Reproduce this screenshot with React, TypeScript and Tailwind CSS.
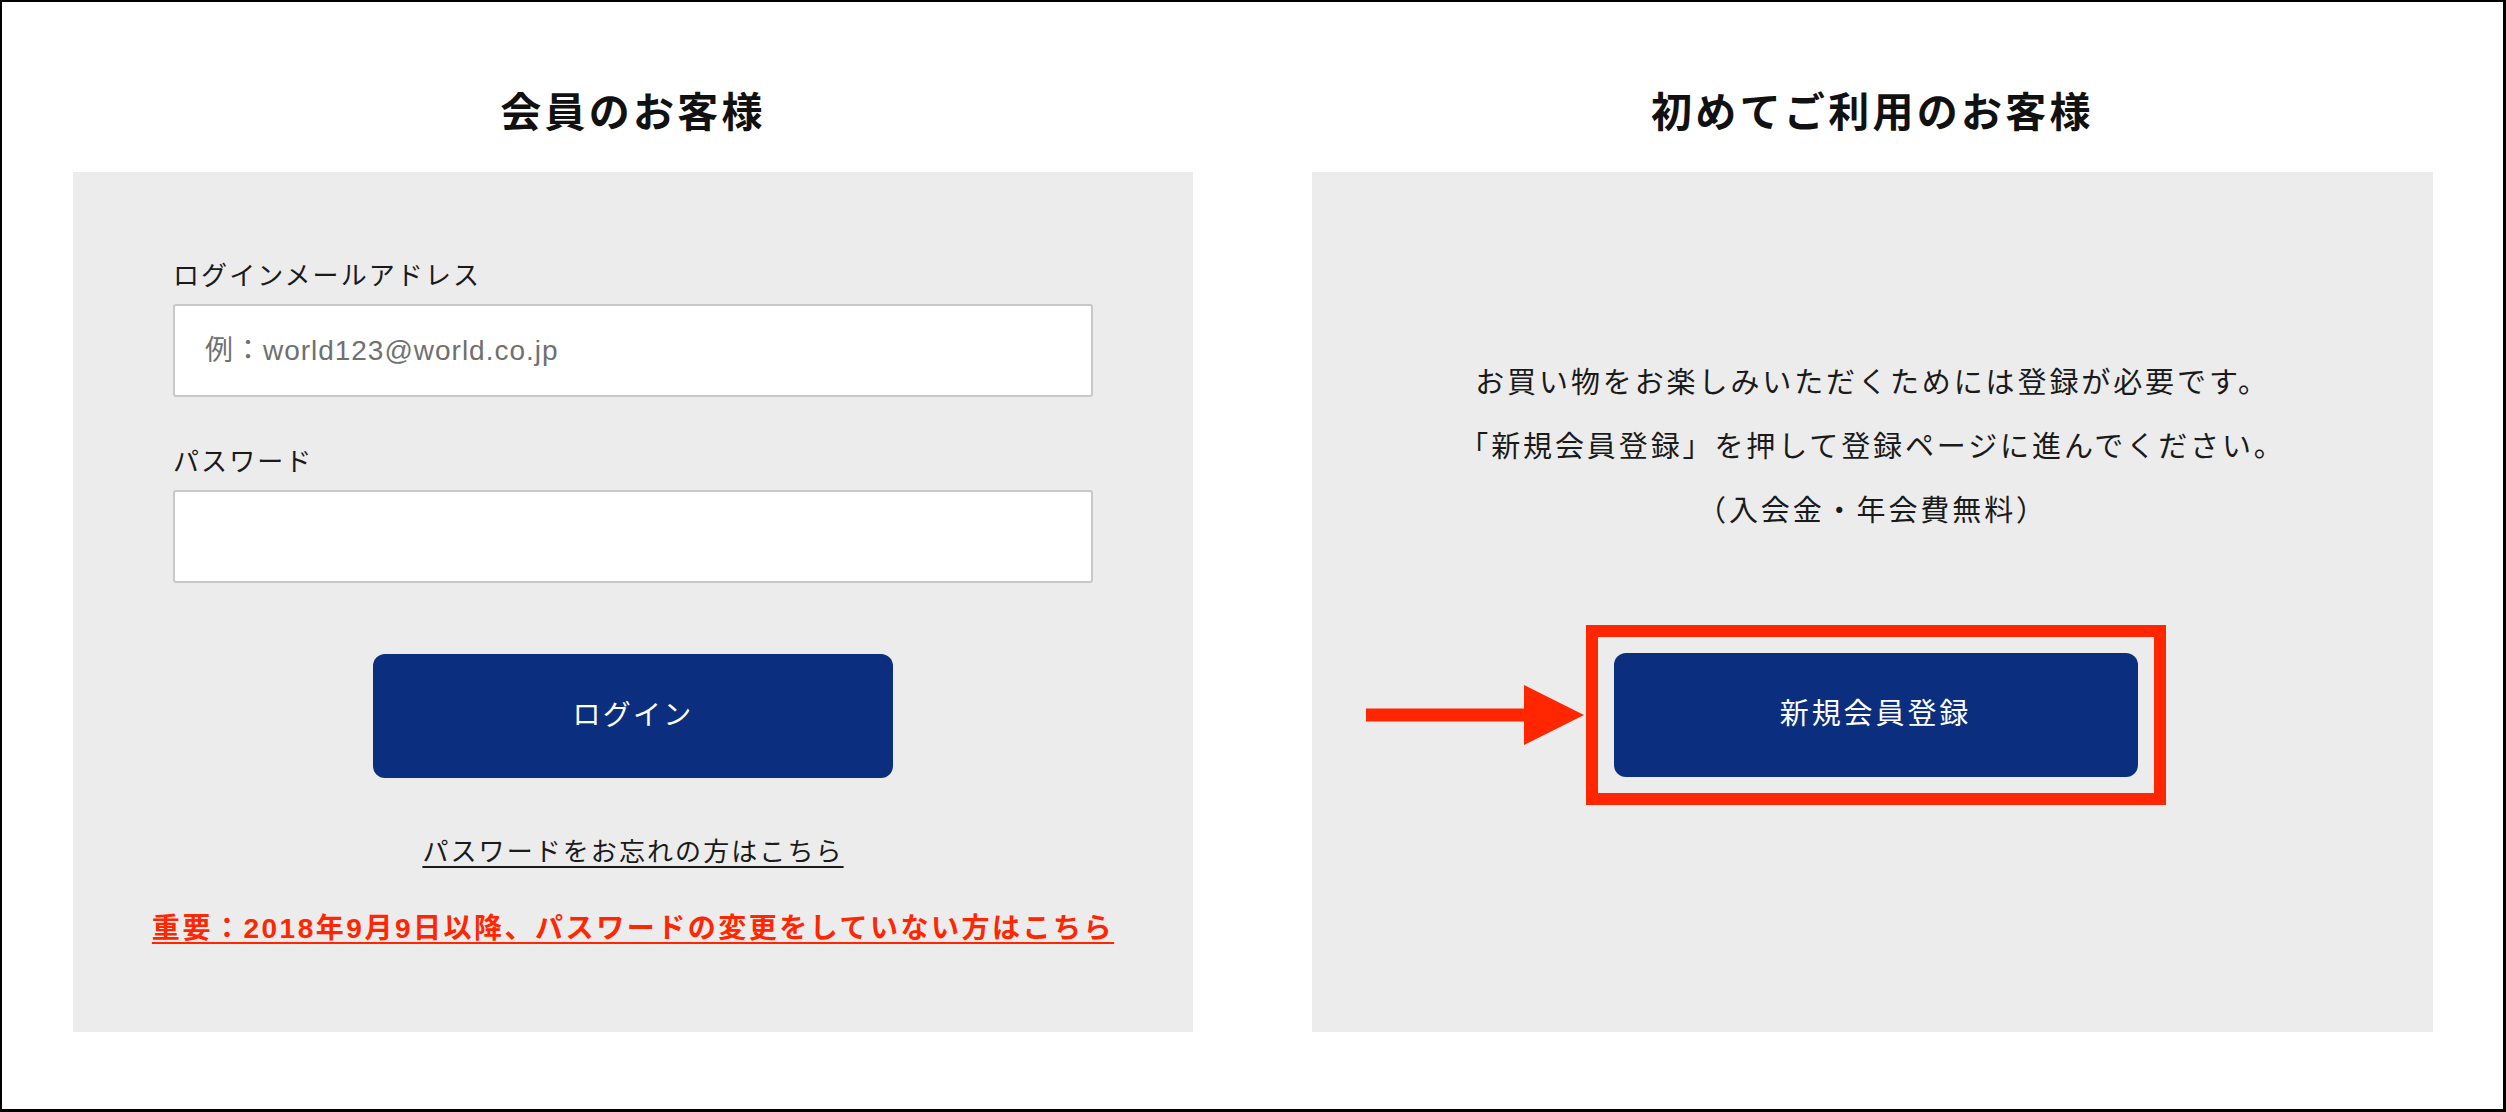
const font = { fontFamily: '"Liberation Sans", "Noto Sans CJK JP", sans-serif' };

function Arrow() {
  return (
    <svg width="218" height="60" viewBox="0 0 218 60" className="absolute right-full top-1/2 -translate-y-1/2 mr-[14px]">
      <rect x="0" y="23.5" width="160" height="13" fill="#ff2600" />
      <polygon points="158,0 218,30 158,60" fill="#ff2600" />
    </svg>
  );
}

function MemberPanel() {
  return (
    <div className="h-[860px] bg-[#ececec] px-[100px] pt-[86px] flex flex-col">
      <label className="block text-[26px] leading-[36px] tracking-[0.08em] text-[#1a1a1a]">ログインメールアドレス</label>
      <input
        type="text"
        placeholder="例：world123@world.co.jp"
        className="mt-[10px] h-[93px] w-full rounded-[3px] border-2 border-[#c8c8c8] bg-white pl-[30px] text-[28px] tracking-[0.035em] text-[#1a1a1a] placeholder:text-[#707070] outline-none"
        style={font}
      />
      <label className="mt-[47px] block text-[26px] leading-[36px] tracking-[0.08em] text-[#1a1a1a]">パスワード</label>
      <input
        type="password"
        className="mt-[10px] h-[93px] w-full rounded-[3px] border-2 border-[#c8c8c8] bg-white px-[30px] text-[26px] outline-none"
      />
      <button className="mx-auto mt-[71px] h-[124px] w-[520px] rounded-[12px] bg-[#0b2f7e] text-[28px] tracking-[0.08em] text-white">
        ログイン
      </button>
      <a href="#" className="mt-[56px] self-center text-[26px] leading-[36px] tracking-[0.08em] text-[#1a1a1a] underline underline-offset-[5px] decoration-[2px]">
        パスワードをお忘れの方はこちら
      </a>
      <a href="#" className="mt-[41px] self-center whitespace-nowrap text-[28px] font-bold leading-[36px] tracking-[0.09em] text-[#ff2600] underline underline-offset-[4px] decoration-[2px]">
        重要：2018年9月9日以降、パスワードの変更をしていない方はこちら
      </a>
    </div>
  );
}

function GuestPanel() {
  return (
    <div className="h-[860px] bg-[#ececec] pt-[179px] flex flex-col items-center">
      <div className="text-center text-[29px] leading-[64px] tracking-[0.1em] text-[#1a1a1a]">
        <p>お買い物をお楽しみいただくためには登録が必要です。</p>
        <p>「新規会員登録」を押して登録ページに進んでください。</p>
        <p>（入会金・年会費無料）</p>
      </div>
      <div className="relative mt-[82px] ml-[6px] border-[12px] border-[#ff2600] px-[16px] py-[16px]">
        <Arrow />
        <button className="h-[124px] w-[524px] rounded-[12px] bg-[#0b2f7e] text-[29px] tracking-[0.1em] text-white">
          新規会員登録
        </button>
      </div>
    </div>
  );
}

export default function App() {
  return (
    <div
      className="h-[1112px] w-full border-t-2 border-l-2 border-r-[3px] border-b-[3px] border-black bg-white"
      style={font}
    >
      <div className="flex gap-[119px] pl-[71px]">
        <section className="w-[1120px] shrink-0">
          <h2 className="h-[170px] pt-[89px] text-center text-[41px] font-bold leading-[44px] tracking-[0.08em] text-[#111]">
            会員のお客様
          </h2>
          <MemberPanel />
        </section>
        <section className="w-[1121px] shrink-0">
          <h2 className="h-[170px] pt-[89px] text-center text-[41px] font-bold leading-[44px] tracking-[0.08em] text-[#111]">
            初めてご利用のお客様
          </h2>
          <GuestPanel />
        </section>
      </div>
    </div>
  );
}
